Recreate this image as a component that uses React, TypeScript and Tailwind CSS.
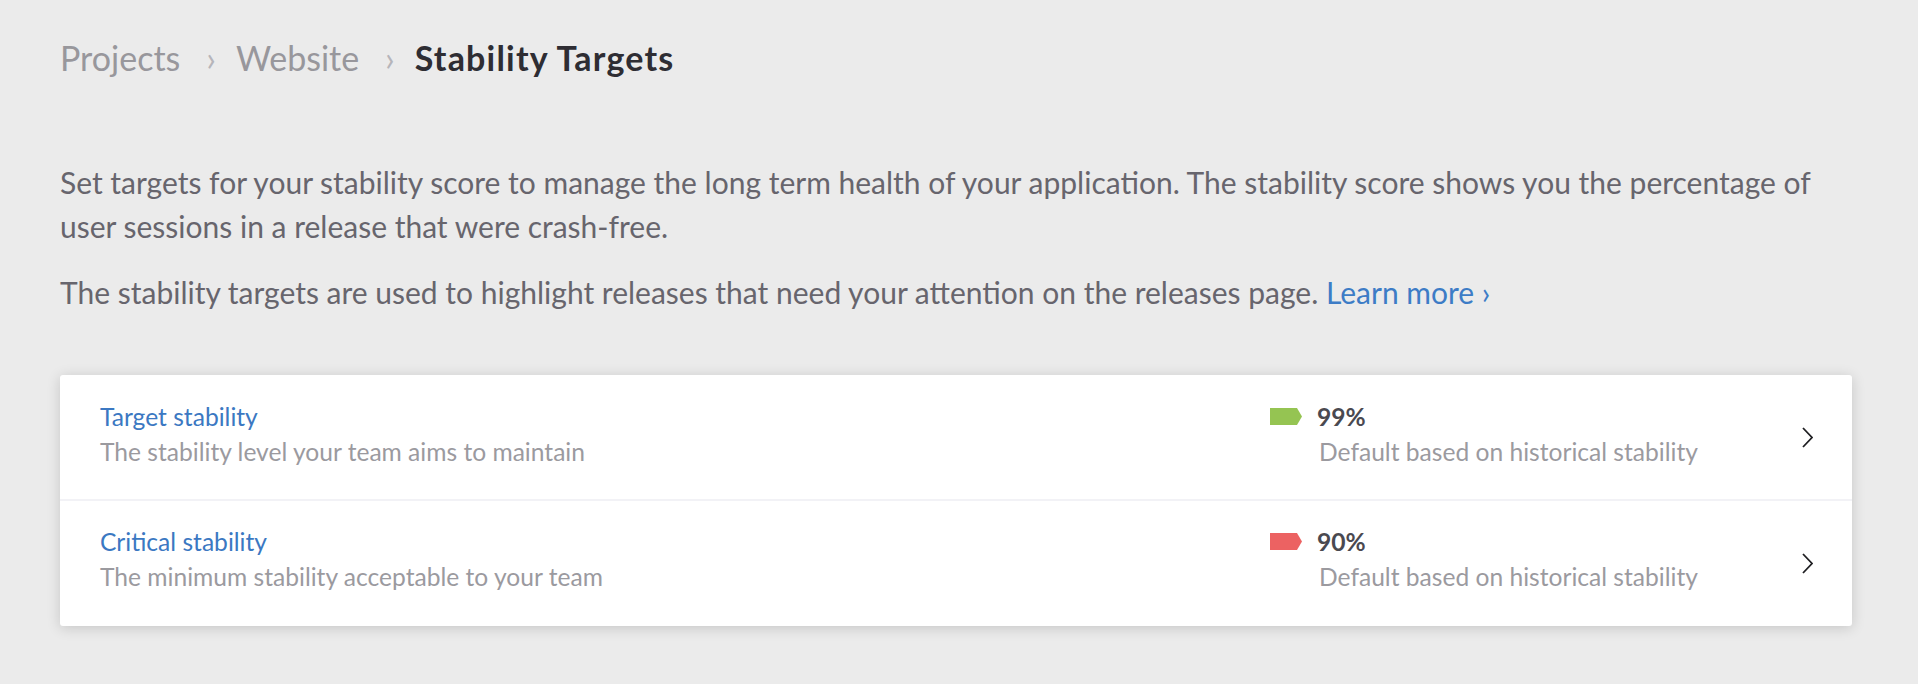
import React from "react";

function Tag({ color }: { color: string }) {
  return (
    <svg width="32" height="17" viewBox="0 0 32 17" className="mr-[15px] shrink-0">
      <path d="M0 0 H27 L32 8.5 L27 17 H0 Z" fill={color} />
    </svg>
  );
}

function Chevron() {
  return (
    <svg width="11" height="21" viewBox="0 0 11 21" className="mr-[39px] shrink-0">
      <polyline points="1,1 10,10.5 1,20" fill="none" stroke="#1f1f22" strokeWidth="1.8" strokeLinejoin="miter" />
    </svg>
  );
}

function Row({
  title,
  desc,
  value,
  color,
  last,
}: {
  title: string;
  desc: string;
  value: string;
  color: string;
  last?: boolean;
}) {
  return (
    <div
      className={
        last
          ? "flex items-center h-[125px] pl-[40px]"
          : "flex items-center h-[126px] pl-[40px] border-b-2 border-[#f2f2f6]"
      }
    >
      <div className={last ? "flex-1 pb-[10px] text-[24.6px] leading-[35px]" : "flex-1 pb-[6px] text-[24.6px] leading-[35px]"}>
        <div className="text-[#3b78c2]">{title}</div>
        <div className="text-[#9b9a9f]">{desc}</div>
      </div>
      <div className={last ? "w-[532px] pb-[10px] text-[24.6px] leading-[35px]" : "w-[532px] pb-[6px] text-[24.6px] leading-[35px]"}>
        <div className="flex items-center">
          <Tag color={color} />
          <span className="font-bold text-[#4a4950]">{value}</span>
        </div>
        <div className="pl-[49px] text-[#9b9a9f]">Default based on historical stability</div>
      </div>
      <Chevron />
    </div>
  );
}

export default function App() {
  return (
    <div className="min-h-screen w-full bg-[#ebebeb] font-[family-name:Lato,sans-serif] pl-[60px] pr-[66px] pt-[37px]">
      <nav className="flex items-center text-[34px] leading-[41px]">
        <span className="text-[#98979c]">Projects</span>
        <span className="ml-[26px] mr-[20px] text-[#b6b5ba]">›</span>
        <span className="text-[#98979c]">Website</span>
        <span className="ml-[26px] mr-[20px] text-[#b6b5ba]">›</span>
        <span className="font-bold tracking-[1.2px] text-[#2e2d33]">Stability Targets</span>
      </nav>
      <p className="mt-[82px] text-[30px] leading-[44px] text-[#67656d]">
        Set targets for your stability score to manage the long term health of your application. The stability score
        shows you the percentage of user sessions in a release that were crash-free.
      </p>
      <p className="mt-[22px] text-[30px] leading-[44px] text-[#67656d]">
        The stability targets are used to highlight releases that need your attention on the releases page.{" "}
        <a className="text-[#3d7cc6]">Learn more ›</a>
      </p>
      <div className="mt-[61px] bg-white rounded-[3px] shadow-[0_2px_14px_rgba(0,0,0,0.16)]">
        <Row
          title="Target stability"
          desc="The stability level your team aims to maintain"
          value="99%"
          color="#95c452"
        />
        <Row
          title="Critical stability"
          desc="The minimum stability acceptable to your team"
          value="90%"
          color="#ec6262"
          last
        />
      </div>
    </div>
  );
}
